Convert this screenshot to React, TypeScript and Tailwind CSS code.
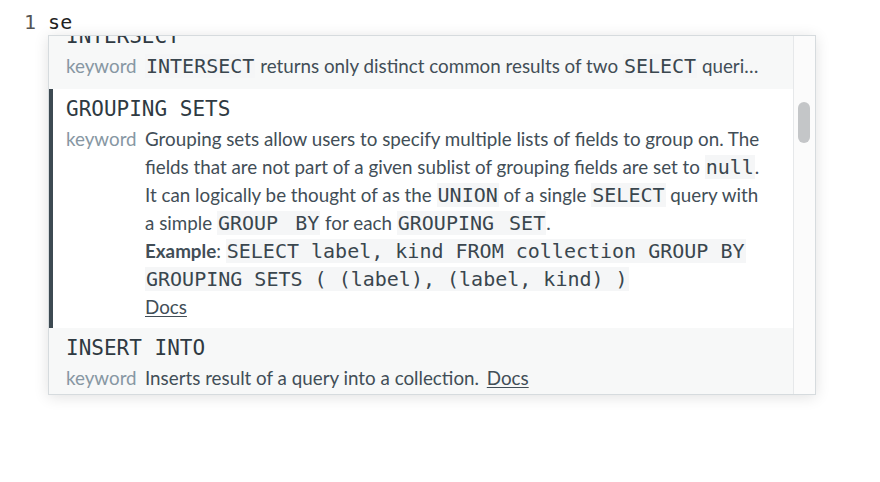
import React from "react";

const mono = "font-['DejaVu_Sans_Mono',monospace]";
const sans = "font-['Lato','Noto_Sans',sans-serif]";

function Code({ children }: { children: React.ReactNode }) {
  return (
    <code className={`${mono} text-[20px] leading-[20px] bg-[#f5f6f7] px-[1px] text-[#3a464e]`}>
      {children}
    </code>
  );
}

function Label() {
  return <span className="w-[79px] shrink-0 text-[#8797a3] h-[28px]">keyword</span>;
}

function Line({ children }: { children: React.ReactNode }) {
  return <span className="block h-[28px] whitespace-nowrap">{children}</span>;
}

function App() {
  return (
    <div className={`w-[880px] h-[482px] bg-white relative overflow-hidden ${sans}`}>
      <div className={`${mono} text-[20px] leading-[24px] pl-[24px] pt-[10px]`}>
        <span className="text-[#555]">1</span>
        <span className="text-[#222]"> se</span>
      </div>

      {/* autocomplete popup */}
      <div className="absolute left-[48px] top-[35px] w-[768px] h-[360px] border border-[#d6dbde] bg-white shadow-[0_2px_14px_rgba(0,0,0,0.12)] flex overflow-hidden">
        <div className="flex-1 overflow-hidden">
          <div className="-mt-[20px] text-[18.8px] text-[#424e57]">
            {/* INTERSECT */}
            <div className="bg-[#f7f8f8] pl-[17px] pr-[20px] pt-[5px] pb-[9px]">
              <div className={`${mono} text-[21px] leading-[31px] text-[#2f3a42]`}>INTERSECT</div>
              <div className="flex leading-[28px]">
                <Label />
                <Line>
                  <Code>INTERSECT</Code> returns only distinct common results of two <Code>SELECT</Code> queri…
                </Line>
              </div>
            </div>

            {/* GROUPING SETS (selected) */}
            <div className="bg-white border-l-4 border-[#3d4a52] pl-[13px] pr-[20px] pt-[5px] pb-[7px]">
              <div className={`${mono} text-[21px] leading-[31px] text-[#2f3a42]`}>GROUPING SETS</div>
              <div className="flex leading-[28px]">
                <Label />
                <div className="flex flex-col">
                  <Line>Grouping sets allow users to specify multiple lists of fields to group on. The</Line>
                  <Line>
                    fields that are not part of a given sublist of grouping fields are set to <Code>null</Code>.
                  </Line>
                  <Line>
                    It can logically be thought of as the <Code>UNION</Code> of a single <Code>SELECT</Code> query with
                  </Line>
                  <Line>
                    a simple <Code>GROUP<span className="ml-[17px]">BY</span></Code> for each{" "}
                    <Code>GROUPING<span className="ml-[15px]">SET</span></Code>.
                  </Line>
                  <Line>
                    <b className="font-bold">Example</b>: <Code>SELECT label, kind FROM collection GROUP BY</Code>
                  </Line>
                  <Line>
                    <Code>GROUPING SETS ( (label), (label, kind) )</Code>
                  </Line>
                  <Line>
                    <a className="underline underline-offset-2 text-[#424e57]">Docs</a>
                  </Line>
                </div>
              </div>
            </div>

            {/* INSERT INTO */}
            <div className="bg-[#f7f8f8] pl-[17px] pr-[20px] pt-[5px] pb-[9px]">
              <div className={`${mono} text-[21px] leading-[31px] text-[#2f3a42]`}>INSERT INTO</div>
              <div className="flex leading-[28px]">
                <Label />
                <Line>
                  Inserts result of a query into a collection.{" "}
                  <a className="underline underline-offset-2 ml-[3px]">Docs</a>
                </Line>
              </div>
            </div>
          </div>
        </div>

        {/* scrollbar */}
        <div className="w-[22px] shrink-0 bg-[#fbfbfb] border-l border-[#e6e8ea] pt-[66px] pl-[4px]">
          <div className="w-[12px] h-[41px] rounded-full bg-[#c4c6c8]" />
        </div>
      </div>
    </div>
  );
}

export default App;
